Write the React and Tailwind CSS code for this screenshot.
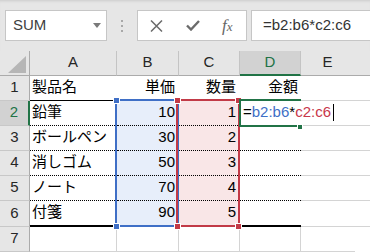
import React from "react";

const rows = [
  { n: 1, a: "製品名", b: "単価", c: "数量", d: "金額" },
  { n: 2, a: "鉛筆", b: "10", c: "1" },
  { n: 3, a: "ボールペン", b: "30", c: "2" },
  { n: 4, a: "消しゴム", b: "50", c: "3" },
  { n: 5, a: "ノート", b: "70", c: "4" },
  { n: 6, a: "付箋", b: "90", c: "5" },
];

const lineFor = (n) => {
  if (n === 1) return "h-[25px] border-b border-black";
  if (n === 6) return "h-[26px] border-b-2 border-black";
  return "h-[25px] border-b border-dotted border-black";
};

const Toolbar = () => (
  <div className="h-[51px] bg-[#e6e6e6] shadow-[inset_0_3px_3px_-2px_rgba(0,0,0,0.12)] flex items-start pt-[10px] pl-[5px]">
    {/* name box */}
    <div className="w-[102px] h-[31px] bg-white border border-[#c6c6c6] flex items-center justify-between pl-[7px] pr-[5px]">
      <span className="text-[15px] text-[#404040]">SUM</span>
      <svg width="8" height="5" viewBox="0 0 8 5">
        <path d="M0 0H8L4 5Z" fill="#7a7a7a" />
      </svg>
    </div>
    <div className="ml-[14px] mt-[10px] flex flex-col gap-[3px]">
      <div className="w-[2px] h-[2px] bg-[#a8a8a8]" />
      <div className="w-[2px] h-[2px] bg-[#a8a8a8]" />
      <div className="w-[2px] h-[2px] bg-[#a8a8a8]" />
    </div>
    {/* cancel / enter / fx */}
    <div className="ml-[14px] w-[110px] h-[31px] bg-white border border-[#c6c6c6] flex items-center pl-[12px]">
      <svg width="13" height="12" viewBox="0 0 13 12">
        <path d="M1 0.5L12 11.5M12 0.5L1 11.5" stroke="#6b6b6b" strokeWidth="1.5" />
      </svg>
      <svg className="ml-[23px]" width="14" height="11" viewBox="0 0 14 11">
        <path d="M1 5.5L5 9.5L13 1" stroke="#6b6b6b" strokeWidth="2.4" fill="none" />
      </svg>
      <span className="ml-[22px] font-['Liberation_Serif',serif] italic text-[#666] leading-none">
        <span className="text-[17px]">f</span>
        <span className="text-[13px]">x</span>
      </span>
    </div>
    {/* formula */}
    <div className="ml-[4px] flex-1 h-[31px] bg-white border border-r-0 border-[#c6c6c6] flex items-center pl-[11px]">
      <span className="text-[15px] text-[#333]">=b2:b6*c2:c6</span>
    </div>
  </div>
);

const Grid = () => (
  <div className="relative">
    <div className="grid grid-cols-[30px_87px_62px_61px_61px_1fr]">
      {/* header row */}
      <div className="h-[25px] bg-[#e6e6e6] border-r border-b border-[#ababab] flex items-end justify-end pr-[3px] pb-[2px]">
        <svg width="18" height="17" viewBox="0 0 18 17">
          <path d="M18 0V17H0Z" fill="#b6b6b6" />
        </svg>
      </div>
      {["A", "B", "C"].map((c) => (
        <div
          key={c}
          className="h-[25px] bg-[#e6e6e6] border-r border-r-[#c4c4c4] border-b border-b-[#ababab] flex items-center justify-center text-[15px] text-[#262626] pb-[1px]"
        >
          {c}
        </div>
      ))}
      <div className="h-[25px] bg-[#d2d2d2] border-r border-r-[#c4c4c4] border-b-2 border-b-[#217346] flex items-center justify-center text-[15px] text-[#217346]">
        D
      </div>
      <div className="h-[25px] bg-[#e6e6e6] border-b border-[#ababab] flex items-center justify-center text-[15px] text-[#262626] pb-[1px] pr-[16px]">
        E
      </div>

      {rows.map((r) => {
        const line = lineFor(r.n);
        const active = r.n === 2;
        return (
          <React.Fragment key={r.n}>
            <div
              className={
                (active
                  ? "bg-[#d2d2d2] text-[#217346] border-r-2 border-r-[#217346] "
                  : "bg-[#e6e6e6] text-[#262626] border-r border-r-[#ababab] ") +
                (r.n === 6 ? "h-[26px] " : "h-[25px] ") +
                "border-b border-b-[#c8c8c8] flex items-center justify-center text-[15px] pb-[1px]"
              }
            >
              {r.n}
            </div>
            <div className={line + " flex items-center pl-[2px] pb-[2px] text-[15px] text-black whitespace-nowrap"}>
              {r.a}
            </div>
            <div
              className={
                line +
                (r.n === 1 ? " bg-white" : " bg-[#e7eefa]") +
                " flex items-center justify-end pr-[4px] pb-[2px] text-[15px] text-black"
              }
            >
              {r.b}
            </div>
            <div
              className={
                line +
                (r.n === 1 ? " bg-white" : " bg-[#f9e6e7]") +
                " flex items-center justify-end pr-[4px] pb-[2px] text-[15px] text-black"
              }
            >
              {r.c}
            </div>
            <div className={line + " flex items-center justify-end pr-[3px] pb-[2px] text-[15px] text-black"}>
              {r.d}
            </div>
            <div className={(r.n === 6 ? "h-[26px] " : "h-[25px] ") + "border-b border-[#d4d4d4]"} />
          </React.Fragment>
        );
      })}

      {/* row 7 */}
      <div className="h-[25px] bg-[#e6e6e6] border-r border-r-[#ababab] border-b border-b-[#c8c8c8] flex items-center justify-center text-[15px] text-[#262626] pb-[1px]">
        7
      </div>
      <div className="h-[25px] border-r border-b border-[#d4d4d4]" />
      <div className="h-[25px] border-r border-b border-[#d4d4d4]" />
      <div className="h-[25px] border-r border-b border-[#d4d4d4]" />
      <div className="h-[25px] border-r border-b border-[#d4d4d4]" />
      <div className="h-[25px] border-b border-[#d4d4d4] mr-[15px]" />
    </div>

    {/* range highlights */}
    <div className="absolute left-[115px] top-[48px] w-[64px] h-[128px] border-2 border-[#3f6fc6]" />
    <div className="absolute left-[176px] top-[48px] w-[64px] h-[128px] border-2 border-[#c23a47]" />
    <div className="absolute left-[113px] top-[46px] w-[7px] h-[7px] bg-[#3f6fc6] border border-white" />
    <div className="absolute left-[113px] top-[172px] w-[7px] h-[7px] bg-[#3f6fc6] border border-white" />
    <div className="absolute left-[174px] top-[46px] w-[7px] h-[7px] bg-[#c23a47] border border-white" />
    <div className="absolute left-[174px] top-[172px] w-[7px] h-[7px] bg-[#c23a47] border border-white" />
    <div className="absolute left-[235px] top-[46px] w-[7px] h-[7px] bg-[#c23a47] border border-white" />
    <div className="absolute left-[235px] top-[172px] w-[7px] h-[7px] bg-[#c23a47] border border-white" />

    {/* active cell in edit mode */}
    <div className="absolute left-[239px] top-[48px] w-[62px] h-[28px] border-l-2 border-t-2 border-b-2 border-[#217346] bg-white flex items-center pl-[2px] pb-[1px]">
      <span className="shrink-0 text-[15px] whitespace-nowrap text-black">
        =<span className="text-[#3f6fc6]">b2:b6</span>*<span className="text-[#c8374a]">c2:c6</span>
      </span>
      <span className="shrink-0 ml-[2px] w-[1px] h-[17px] bg-black" />
    </div>
    <div className="absolute left-[297px] top-[73px] w-[6px] h-[6px] bg-[#217346] border border-white" />
  </div>
);

export default function App() {
  return (
    <div className="w-[370px] h-[252px] overflow-hidden bg-white font-['Liberation_Sans','Noto_Sans_CJK_JP',sans-serif]">
      <Toolbar />
      <Grid />
    </div>
  );
}
